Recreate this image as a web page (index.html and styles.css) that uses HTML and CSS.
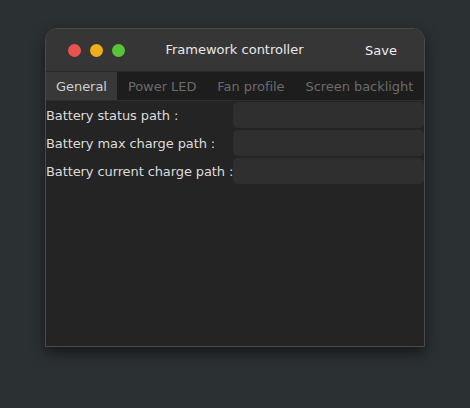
FILE: index.html
```html
<!DOCTYPE html>
<html>
<head>
<meta charset="utf-8">
<link rel="stylesheet" href="styles.css">
</head>
<body>
<div class="window">
  <div class="titlebar">
    <div class="lights">
      <span class="light red"></span>
      <span class="light yellow"></span>
      <span class="light green"></span>
    </div>
    <div class="title">Framework controller</div>
    <div class="save">Save</div>
  </div>
  <div class="tabs">
    <div class="tab active">General</div>
    <div class="tab">Power LED</div>
    <div class="tab">Fan profile</div>
    <div class="tab">Screen backlight</div>
  </div>
  <div class="content">
    <div class="row"><span class="label">Battery status path :</span><div class="input"></div></div>
    <div class="row"><span class="label">Battery max charge path :</span><div class="input"></div></div>
    <div class="row"><span class="label">Battery current charge path :</span><div class="input"></div></div>
  </div>
</div>
</body>
</html>
```
FILE: styles.css
```css
html, body {
  margin: 0;
  padding: 0;
}
body {
  width: 470px;
  height: 408px;
  background: #2b3033;
  font-family: "DejaVu Sans", sans-serif;
  font-size: 13px;
  overflow: hidden;
}
.window {
  margin: 28px 0 0 45px;
  width: 380px;
  height: 319px;
  box-sizing: border-box;
  border: 1px solid #4a4a4a;
  border-radius: 12px 12px 0 0;
  background: #242424;
  box-shadow: 0 6px 14px rgba(0,0,0,0.5);
  display: flex;
  flex-direction: column;
  overflow: hidden;
}
.titlebar {
  height: 43px;
  flex: none;
  background: #363636;
  display: flex;
  align-items: center;
  position: relative;
  border-bottom: 1px solid #2a2a2a;
  box-sizing: border-box;
}
.lights {
  display: flex;
  gap: 9px;
  margin-left: 22px;
}
.light {
  width: 13px;
  height: 13px;
  border-radius: 50%;
}
.red { background: #ea524e; }
.yellow { background: #f0ae1c; }
.green { background: #57c53a; }
.title {
  position: absolute;
  left: -1px;
  right: 0;
  text-align: center;
  color: #e8e8e8;
  top: 13px;
  pointer-events: none;
}
.save {
  margin-left: auto;
  margin-right: 27px;
  color: #ececec;
}
.tabs {
  display: flex;
  height: 29px;
  flex: none;
  background: #1d1d1d;
  border-bottom: 1px solid #2e2e2e;
  box-sizing: border-box;
}
.tab {
  padding: 0 10px;
  line-height: 29px;
  color: #6b6b6b;
  white-space: nowrap;
  margin-right: 1px;
  letter-spacing: -0.05px;
}
.tab.active {
  background: #383838;
  color: #cfcfcf;
}
.content {
  display: grid;
  grid-template-columns: auto 1fr;
  row-gap: 2px;
  padding-top: 1px;
}
.row {
  display: contents;
}
.label {
  color: #dcdcdc;
  align-self: center;
  padding-top: 1px;
  letter-spacing: -0.1px;
}
.input {
  height: 26px;
  background: #2f2f2f;
  border-radius: 5px;
}
```
